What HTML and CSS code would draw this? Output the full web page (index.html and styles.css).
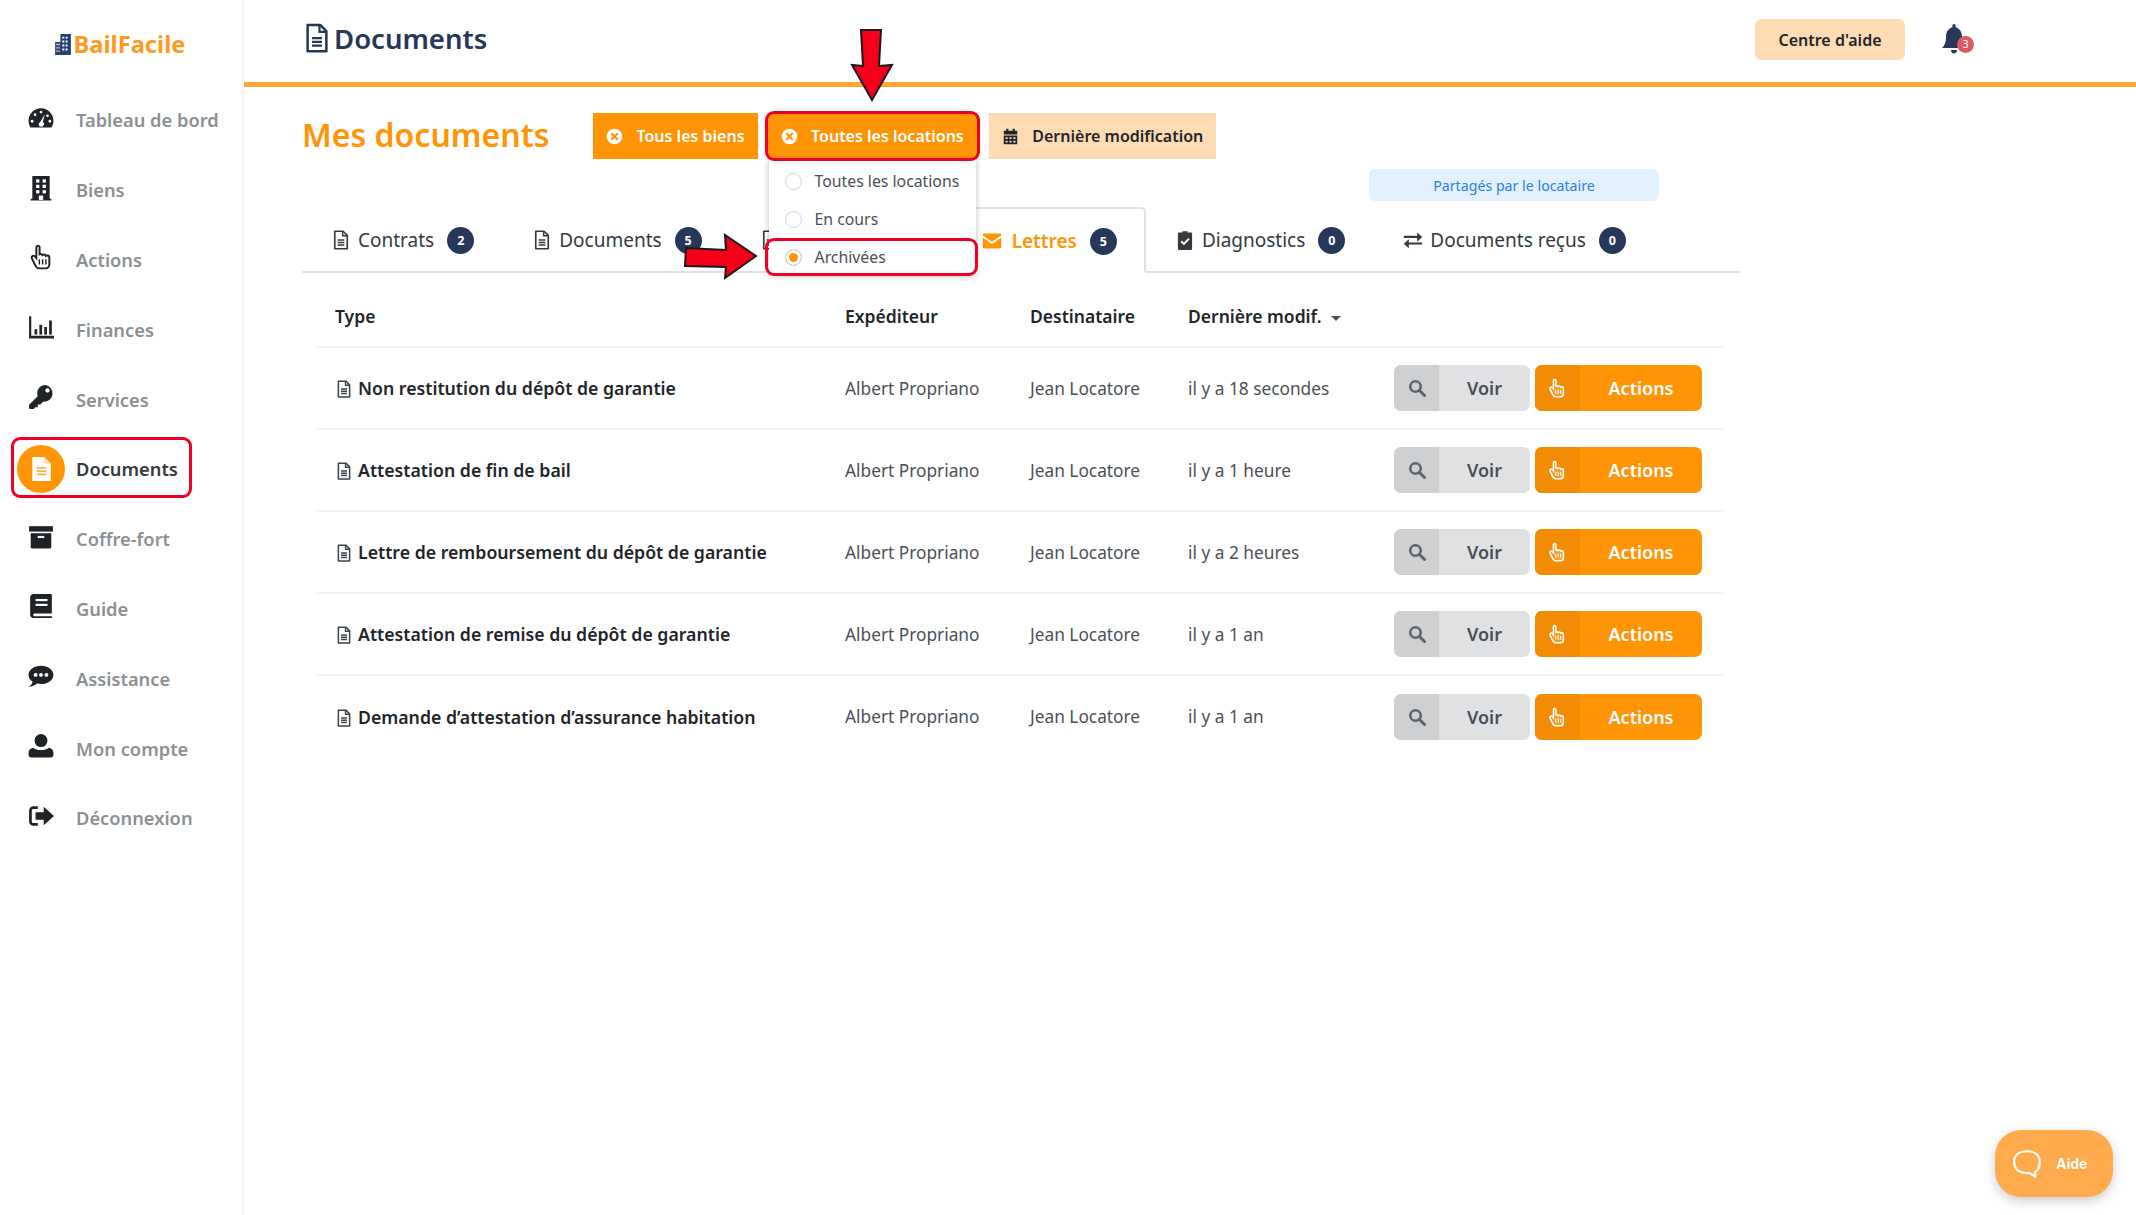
FILE: index.html
```html
<!DOCTYPE html>
<html lang="fr">
<head>
    <meta charset="UTF-8">
    <title>Mes documents</title>
    <link rel="stylesheet" href="styles.css">
</head>
<body>
<svg class="defs" width="0" height="0">
    <symbol id="i-gauge" viewBox="0 0 24 24"><path d="M12 3A11.5 11.5 0 0 0 .5 14.500c0 2.200.6 4 1.600 5.700.2.300.5.500.9.500h18c.4 0 .7-.2.900-.5 1-1.700 1.600-3.500 1.600-5.700A11.500 11.500 0 0 0 12 3z"/><g fill="#fff"><circle cx="3.800" cy="15" r="1.300"/><circle cx="6.500" cy="9" r="1.300"/><circle cx="12" cy="6.500" r="1.300"/><circle cx="20.200" cy="15" r="1.300"/><circle cx="18" cy="10" r="1.200"/><path d="M15.500 8.500l-1.800 7.100a2.300 2.300 0 1 1-2.500 3.900h-.6c-1-1-1-2.600.5-3.500z"/></g></symbol>
    <symbol id="i-building" viewBox="0 0 24 24"><path d="M4 1h16v21h1.500v1.500h-19V22H4z"/><g fill="#fff"><rect x="7.500" y="4" width="3" height="3"/><rect x="13.500" y="4" width="3" height="3"/><rect x="7.500" y="9" width="3" height="3"/><rect x="13.500" y="9" width="3" height="3"/><rect x="7.500" y="14" width="3" height="3"/><rect x="13.500" y="14" width="3" height="3"/><rect x="10" y="19" width="4" height="4"/></g></symbol>
    <symbol id="i-hand" viewBox="0 0 24 24"><path d="M9.500 1.500c-1 0-1.800.8-1.800 1.800V13l-1.500-1.600c-1.200-1.200-3.400 0-2.600 1.800l2.600 5.600c.8 1.700 2 3.700 4 3.700h6c2 0 3.500-1.500 3.500-3.500v-6.500c0-1.100-.8-1.900-1.800-1.900-.5 0-.9.200-1.300.5-.2-.9-1-1.400-1.800-1.400-.6 0-1.100.2-1.500.6-.3-.7-1-1-1.700-1-.3 0-.6 0-.9.200V3.300c0-1-.8-1.800-1.800-1.800z" fill="#fff" fill-opacity=".15" stroke="currentColor" stroke-width="1.800"/><path d="M10.500 14v5M13.500 14v5M16.500 14v5" stroke="currentColor" stroke-width="1.300" fill="none"/></symbol>
    <symbol id="i-chart" viewBox="0 0 24 24"><path d="M1 2h2v18h21v2.500H1z"/><rect x="6" y="14" width="2.500" height="5"/><rect x="10.500" y="10" width="2.500" height="9"/><rect x="15" y="12" width="2.500" height="7"/><rect x="19.500" y="6" width="2.500" height="13"/></symbol>
    <symbol id="i-key" viewBox="0 0 24 24"><path d="M16 1a7.500 7.500 0 0 0-7 10.200L1 19.200V22c0 .6.400 1 1 1h3.500l1-1.500H9v-2.500h2.500l2.400-2.700A7.500 7.500 0 1 0 16 1zm2 7a2 2 0 1 1 0-4 2 2 0 0 1 0 4z"/></symbol>
    <symbol id="i-archive" viewBox="0 0 24 24"><rect x="1" y="2" width="22" height="5"/><path d="M2.500 8.500h19v13c0 .6-.4 1-1 1h-17c-.6 0-1-.4-1-1z"/><rect x="9" y="11" width="6" height="2" fill="#fff"/></symbol>
    <symbol id="i-book" viewBox="0 0 24 24"><path d="M5 1h16c.6 0 1 .4 1 1v17H6c-1.500 0-1.500 2.500 0 2.500h16V23H5c-1.700 0-3-1.300-3-3V4c0-1.700 1.300-3 3-3z"/><rect x="7" y="5.500" width="11" height="2" fill="#fff"/><rect x="7" y="10" width="11" height="2" fill="#fff"/></symbol>
    <symbol id="i-comment" viewBox="0 0 24 24"><path d="M12 2.500C5.600 2.500.5 6.300.5 11c0 2.500 1.400 4.700 3.700 6.200C3.900 19 2.800 20.700.5 22c3 0 6-1.300 8-3 1.100.2 2.300.4 3.500.4 6.400 0 11.500-3.800 11.500-8.400S18.400 2.500 12 2.500z"/><g fill="#fff"><circle cx="7" cy="11" r="1.800"/><circle cx="12" cy="11" r="1.800"/><circle cx="17" cy="11" r="1.800"/></g></symbol>
    <symbol id="i-user" viewBox="0 0 24 24"><circle cx="12" cy="7" r="6"/><path d="M4.500 13.500C6.500 15 9 15.800 12 15.800s5.500-.8 7.500-2.300c2.500.5 4 2.300 4 5V20c0 1.500-1 2.500-2.500 2.500H3C1.500 22.500.5 21.500.5 20v-1.500c0-2.700 1.500-4.500 4-5z"/></symbol>
    <symbol id="i-signout" viewBox="0 0 24 24"><path d="M9 3H5C2.800 3 1 4.800 1 7v10c0 2.200 1.800 4 4 4h4v-2.500H5c-.8 0-1.500-.7-1.500-1.500V7c0-.8.700-1.500 1.500-1.500h4z"/><path d="M14.500 3.500L24 12l-9.500 8.500V15.500H7v-7h7.500z"/></symbol>
    <symbol id="i-file" viewBox="0 0 24 24"><path d="M4.500 1.500h10l5 5v16h-15z" fill="none" stroke="currentColor" stroke-width="2" stroke-linejoin="round"/><path d="M14 2v5h5M8 12h8M8 15h8M8 18h8" fill="none" stroke="currentColor" stroke-width="1.800"/></symbol>
    <symbol id="i-search" viewBox="0 0 24 24"><circle cx="10" cy="10" r="7" fill="none" stroke="currentColor" stroke-width="3.400"/><path d="M15 15l7 7" stroke="currentColor" stroke-width="4" stroke-linecap="round"/></symbol>
    <symbol id="i-calendar" viewBox="0 0 24 24"><path d="M6 1h3v3h6V1h3v3h3.500v5h-19V4H6z"/><path d="M2.500 10.500h19V23h-19zM5 13v2.500h3V13zm5.500 0v2.500h3V13zM16 13v2.500h3V13zM5 18v2.500h3V18zm5.500 0v2.500h3V18zM16 18v2.500h3V18z" fill-rule="evenodd"/></symbol>
    <symbol id="i-mail" viewBox="0 0 24 24"><path d="M1 4.500C1 3.700 1.700 3 2.500 3h19c.8 0 1.500.7 1.500 1.500v1L12 13 1 5.500z"/><path d="M1 8l11 7.500L23 8v11.500c0 .8-.7 1.500-1.500 1.500h-19C1.700 21 1 20.300 1 19.500z"/></symbol>
    <symbol id="i-check" viewBox="0 0 24 24"><path d="M9 3V1.500h6V3h4c.8 0 1.500.7 1.500 1.500v18c0 .8-.7 1.500-1.500 1.500H5c-.8 0-1.500-.7-1.500-1.500v-18C3.500 3.700 4.200 3 5 3z"/><path d="M7.500 13.500l3.200 3.300 6-6.300" fill="none" stroke="#fff" stroke-width="2.200"/></symbol>
    <symbol id="i-exchange" viewBox="0 0 24 24"><path d="M1 7h16V3l6 5.500-6 5.500V9.500H1zM23 15H7v-4L1 16.500 7 22v-4.500h16z"/></symbol>
    <symbol id="i-close" viewBox="0 0 24 24"><path d="M12 1a11 11 0 1 0 0 22 11 11 0 0 0 0-22zm5.600 14.400l-2.200 2.200L12 14.200l-3.400 3.400-2.200-2.200L9.800 12 6.400 8.600l2.200-2.200L12 9.800l3.400-3.400 2.200 2.200-3.400 3.400z"/></symbol>
</svg>

<div class="page">
    <aside class="sidebar">
        <a class="logo" href="#">
            <svg class="logo-icon" viewBox="0 0 24 32"><path fill="#27406f" d="M0 12h8V0h16v32H0z"/><path fill="#fff" d="M2 15h2v2H2zm3 0h2v2H5zM2 20h2v2H2zm3 0h2v2H5zM2 25h2v2H2zm3 0h2v2H5zM11 4h3v3h-3zm5 0h3v3h-3zm-5 6h3v3h-3zm5 0h3v3h-3zm-5 6h3v3h-3zm5 0h3v3h-3zm-5 6h3v3h-3zm5 0h3v3h-3z"/></svg>
            <span>BailFacile</span>
        </a>
        <nav class="menu">
            <a class="menu-item" href="#"><span class="menu-ico"><svg><use href="#i-gauge"/></svg></span>Tableau de bord</a>
            <a class="menu-item" href="#"><span class="menu-ico"><svg><use href="#i-building"/></svg></span>Biens</a>
            <a class="menu-item" href="#"><span class="menu-ico"><svg><use href="#i-hand"/></svg></span>Actions</a>
            <a class="menu-item" href="#"><span class="menu-ico"><svg><use href="#i-chart"/></svg></span>Finances</a>
            <a class="menu-item" href="#"><span class="menu-ico"><svg><use href="#i-key"/></svg></span>Services</a>
            <a class="menu-item active" href="#">
                <span class="menu-ico">
                    <svg viewBox="0 0 24 24"><path fill="#fff" d="M4 1h11l6 6v16H4z"/><path fill="#ffd9a3" d="M15 1v6h6z"/><path stroke="#ffb04d" stroke-width="1.600" d="M8 11h9M8 14h9M8 17h9"/></svg>
                </span>Documents
            </a>
            <a class="menu-item" href="#"><span class="menu-ico"><svg><use href="#i-archive"/></svg></span>Coffre-fort</a>
            <a class="menu-item" href="#"><span class="menu-ico"><svg><use href="#i-book"/></svg></span>Guide</a>
            <a class="menu-item" href="#"><span class="menu-ico"><svg><use href="#i-comment"/></svg></span>Assistance</a>
            <a class="menu-item" href="#"><span class="menu-ico"><svg><use href="#i-user"/></svg></span>Mon compte</a>
            <a class="menu-item" href="#"><span class="menu-ico"><svg><use href="#i-signout"/></svg></span>Déconnexion</a>
        </nav>
    </aside>

    <div class="main">
        <header class="topbar">
            <h1 class="page-title"><svg class="title-ico"><use href="#i-file"/></svg>Documents</h1>
            <div class="top-right">
                <a class="help-btn" href="#">Centre d'aide</a>
                <span class="bell">
                    <svg viewBox="0 0 24 32"><path d="M12 0c1 0 1.600.8 1.600 1.800v1.500C18 4.500 20 8.500 20 13c0 5 1 8 4 11H0c3-3 4-6 4-11 0-4.500 2-8.500 6.400-9.700V1.800C10.400.8 11 0 12 0zM9 26h6c0 2-1.300 3.500-3 3.500S9 28 9 26z"/></svg>
                    <span class="bell-count">3</span>
                </span>
            </div>
        </header>

        <section class="content">
            <div class="toolbar">
                <h2 class="section-title">Mes documents</h2>
                <button class="filter"><svg><use href="#i-close"/></svg>Tous les biens</button>
                <div class="filter-wrap">
                    <button class="filter"><svg><use href="#i-close"/></svg>Toutes les locations</button>
                    <ul class="dropdown">
                        <li><span class="radio"></span>Toutes les locations</li>
                        <li><span class="radio"></span>En cours</li>
                        <li class="checked"><span class="radio"></span>Archivées</li>
                    </ul>
                </div>
                <button class="filter light"><svg><use href="#i-calendar"/></svg>Dernière modification</button>
            </div>

            <div class="shared-row"><span class="shared">Partagés par le locataire</span></div>

            <ul class="tabs">
                <li class="tab"><svg><use href="#i-file"/></svg>Contrats<b class="count">2</b></li>
                <li class="tab"><svg><use href="#i-file"/></svg>Documents<b class="count">5</b></li>
                <li class="tab tab-hidden"><svg><use href="#i-file"/></svg></li>
                <li class="tab active"><svg><use href="#i-mail"/></svg>Lettres<b class="count">5</b></li>
                <li class="tab"><svg><use href="#i-check"/></svg>Diagnostics<b class="count">0</b></li>
                <li class="tab"><svg><use href="#i-exchange"/></svg>Documents reçus<b class="count">0</b></li>
            </ul>

            <table class="docs">
                <colgroup>
                    <col class="col-type"><col class="col-from"><col class="col-to"><col class="col-date"><col>
                </colgroup>
                <thead>
                    <tr><th>Type</th><th>Expéditeur</th><th>Destinataire</th><th>Dernière modif. <i class="caret"></i></th><th></th></tr>
                </thead>
                <tbody>
                    <tr>
                        <td class="doc-name"><svg><use href="#i-file"/></svg>Non restitution du dépôt de garantie</td>
                        <td>Albert Propriano</td><td>Jean Locatore</td><td>il y a 18 secondes</td>
                        <td><div class="btns"><a class="btn grey" href="#"><span class="btn-ico"><svg><use href="#i-search"/></svg></span><span class="btn-txt">Voir</span></a><a class="btn orange" href="#"><span class="btn-ico"><svg><use href="#i-hand"/></svg></span><span class="btn-txt">Actions</span></a></div></td>
                    </tr>
                    <tr>
                        <td class="doc-name"><svg><use href="#i-file"/></svg>Attestation de fin de bail</td>
                        <td>Albert Propriano</td><td>Jean Locatore</td><td>il y a 1 heure</td>
                        <td><div class="btns"><a class="btn grey" href="#"><span class="btn-ico"><svg><use href="#i-search"/></svg></span><span class="btn-txt">Voir</span></a><a class="btn orange" href="#"><span class="btn-ico"><svg><use href="#i-hand"/></svg></span><span class="btn-txt">Actions</span></a></div></td>
                    </tr>
                    <tr>
                        <td class="doc-name"><svg><use href="#i-file"/></svg>Lettre de remboursement du dépôt de garantie</td>
                        <td>Albert Propriano</td><td>Jean Locatore</td><td>il y a 2 heures</td>
                        <td><div class="btns"><a class="btn grey" href="#"><span class="btn-ico"><svg><use href="#i-search"/></svg></span><span class="btn-txt">Voir</span></a><a class="btn orange" href="#"><span class="btn-ico"><svg><use href="#i-hand"/></svg></span><span class="btn-txt">Actions</span></a></div></td>
                    </tr>
                    <tr>
                        <td class="doc-name"><svg><use href="#i-file"/></svg>Attestation de remise du dépôt de garantie</td>
                        <td>Albert Propriano</td><td>Jean Locatore</td><td>il y a 1 an</td>
                        <td><div class="btns"><a class="btn grey" href="#"><span class="btn-ico"><svg><use href="#i-search"/></svg></span><span class="btn-txt">Voir</span></a><a class="btn orange" href="#"><span class="btn-ico"><svg><use href="#i-hand"/></svg></span><span class="btn-txt">Actions</span></a></div></td>
                    </tr>
                    <tr>
                        <td class="doc-name"><svg><use href="#i-file"/></svg>Demande d’attestation d’assurance habitation</td>
                        <td>Albert Propriano</td><td>Jean Locatore</td><td>il y a 1 an</td>
                        <td><div class="btns"><a class="btn grey" href="#"><span class="btn-ico"><svg><use href="#i-search"/></svg></span><span class="btn-txt">Voir</span></a><a class="btn orange" href="#"><span class="btn-ico"><svg><use href="#i-hand"/></svg></span><span class="btn-txt">Actions</span></a></div></td>
                    </tr>
                </tbody>
            </table>
        </section>
    </div>
</div>

<a class="aide" href="#">
    <svg viewBox="0 0 30 30"><path d="M14 3c7 0 12 3.500 12 10 0 5-2 8.500-4.500 9.500L22 27l-5.500-3.500C8 24 2 21 2 13 2 6.500 7 3 14 3z" fill="none" stroke="#fff" stroke-width="2" stroke-linejoin="round"/></svg>
    Aide
</a>

<!-- annotations posees sur la capture -->
<div class="mark mark-menu"></div>
<div class="mark mark-filter"></div>
<div class="mark mark-option"></div>
<svg class="arrows" viewBox="0 0 2136 1215">
    <path d="M861 30h20l-2 36 13-1-20 35-20-35 11 1z"/>
    <path d="M686 248l40 2-1-15 31 21-31 22 1-11-41-1z"/>
</svg>
</body>
</html>
```

FILE: styles.css
```css
*{margin:0;padding:0;box-sizing:border-box;list-style:none;}

html,body{height:100%;}
body{font-family:"Noto Sans","Open Sans",sans-serif;color:#212529;background:#fff;overflow:hidden;}
a{text-decoration:none;color:inherit;}
button{font-family:inherit;border:0;}
svg{fill:currentColor;}
.defs{position:absolute;}

.page{display:flex;height:1215px;}

/* sidebar */
.sidebar{width:244px;flex:none;border-right:2px solid #f5f6f7;}
.logo{display:flex;align-items:center;justify-content:center;height:88px;gap:3px;padding-right:2px;font-size:23.700px;font-weight:700;color:#ff9a1f;}
.logo-icon{width:16px;height:21px;}
.menu{display:flex;flex-direction:column;margin-top:-3px;}
.menu-item{display:flex;align-items:center;height:69.8px;padding-left:17px;font-size:18.300px;font-weight:600;color:#8b9094;}
.menu-ico{width:48px;height:48px;margin-right:11px;display:flex;align-items:center;justify-content:center;color:#1f2327;flex:none;}
.menu-ico svg{width:26px;height:26px;margin-bottom:4px;}
.menu-item.active{color:#343a40;}
.menu-item.active .menu-ico{background:#ff9505;border-radius:50%;}
.menu-item.active .menu-ico svg{margin-bottom:0;}

/* header */
.main{flex:1;min-width:0;}
.topbar{height:87px;border-bottom:5px solid #ffa733;display:flex;align-items:center;justify-content:space-between;padding:0 170px 6px 58px;}
.page-title{display:flex;align-items:center;font-size:27.500px;font-weight:600;color:#26375a;}
.title-ico{width:30px;height:30px;margin-right:2px;}
.top-right{display:flex;align-items:center;gap:37px;margin-top:3px;}
.help-btn{display:flex;align-items:center;justify-content:center;width:150px;height:41px;border-radius:7px;background:#fddcb3;color:#212529;font-size:16px;font-weight:600;}
.bell{position:relative;display:block;width:24px;height:32px;color:#26375a;}
.bell svg{width:24px;height:32px;}
.bell-count{position:absolute;left:15px;top:12px;width:17px;height:17px;border-radius:50%;background:#dc5a66;color:#fff;font-size:10px;line-height:17px;text-align:center;}

/* content */
.content{padding:26px 0 0 58px;width:1497px;}
.toolbar{display:flex;align-items:center;height:46px;}
.section-title{font-size:32px;font-weight:600;color:#ff9505;width:291px;padding-bottom:3px;}
.filter{display:flex;align-items:center;height:46px;padding:0 13px;background:#ff9505;color:#fff;font-size:16px;font-weight:600;}
.filter svg{width:17px;height:17px;margin-right:13.500px;}
.toolbar > .filter{margin-right:10px;}
.filter.light{background:#fddcb3;color:#212529;margin-left:12px;}
.filter-wrap{position:relative;}
.dropdown{position:absolute;z-index:3;left:1px;top:46px;width:207px;height:116px;padding-top:3px;background:#fff;border-radius:0 0 4px 4px;box-shadow:0 1px 6px rgba(0,0,0,.25);}
.dropdown li{display:flex;align-items:center;height:38px;padding-left:16px;font-size:15.800px;color:#495057;}
.radio{width:17px;height:17px;border:1px solid #ced4da;border-radius:50%;margin-right:13px;background:#fff;}
.checked .radio{border:1px solid #ced4da;box-shadow:inset 0 0 0 3px #fff;background:#ff9505;}

.shared-row{display:flex;padding:10px 0 0 1067px;height:48px;}
.shared{display:flex;align-items:center;justify-content:center;width:290px;height:32px;border-radius:6px;background:#e3f0fd;color:#2d7fe0;font-size:14.200px;}

.tabs{display:flex;width:1438px;height:66px;border-bottom:2px solid #dee2e6;}
.tab{display:flex;align-items:center;padding:2px 29px 0;font-size:19px;color:#343a40;}
.tab svg{width:20px;height:20px;margin-right:7px;}
.tab-hidden{width:235px;}
.tab.active{color:#ff9505;font-weight:600;padding:2px 27px 0 14px;background:#fff;border:2px solid #dee2e6;border-bottom:2px solid #fff;border-radius:5px 5px 0 0;height:66px;}
.tab.active svg{margin-right:10px;}
.count{display:inline-block;width:27px;height:27px;margin-left:13px;border-radius:50%;background:#26375a;color:#fff;font-size:12.500px;line-height:27px;text-align:center;font-weight:700;}

/* table */
.docs{width:1407px;margin-left:15px;border-collapse:collapse;table-layout:fixed;font-size:17.300px;}
.col-type{width:512px;}
.col-from{width:185px;}
.col-to{width:158px;}
.col-date{width:206px;}
.docs th{height:74px;text-align:left;padding:12px 0 0 16px;font-weight:600;font-size:17.500px;color:#212529;border-bottom:2px solid #f1f2f3;}
.docs th:first-child{padding-left:18px;}
.docs td{height:82px;padding-left:16px;color:#4b5157;border-bottom:2px solid #f1f2f3;}
.docs tr:last-child td{border-bottom:0;}
.docs .doc-name{padding-left:18px;font-weight:600;font-size:17.700px;color:#212529;}
.doc-name svg{width:18px;height:18px;vertical-align:-3px;margin-right:5px;color:#3d4349;}
.caret{display:inline-block;margin-left:5px;vertical-align:2px;border:5px solid transparent;border-top-color:#555;border-bottom:0;}
.btns{display:flex;gap:5px;}
.btn{display:flex;height:46px;border-radius:7px;overflow:hidden;font-size:18px;font-weight:600;}
.btn-ico{width:45px;display:flex;align-items:center;justify-content:center;}
.btn-txt{flex:1;display:flex;align-items:center;justify-content:center;}
.btn.grey{width:136px;background:#e0e1e3;color:#495057;}
.grey .btn-ico{background:#cfd0d2;color:#5f6469;}
.grey .btn-ico svg{width:18px;height:18px;}
.btn.orange{width:167px;background:#ff9505;color:#fff;}
.orange .btn-ico{background:#f28c05;color:#fff;padding-right:2px;}
.orange .btn-ico svg{width:20px;height:20px;}

/* widget aide */
.aide{position:fixed;left:1995px;top:1130px;width:118px;height:67px;border-radius:26px;background:#ffaa4d;box-shadow:0 4px 12px rgba(0,0,0,.2);color:#fff;display:flex;align-items:center;padding-left:17px;gap:12px;font-family:Inter,sans-serif;font-size:14px;font-weight:700;}
.aide svg{width:32px;height:32px;}

/* annotations */
.mark{position:absolute;z-index:5;border:3px solid #f00024;border-radius:9px;}
.mark-menu{left:11px;top:437px;width:181px;height:61px;}
.mark-filter{left:765px;top:111px;width:215px;height:50px;}
.mark-option{left:765px;top:238px;width:213px;height:38px;}
.arrows{position:absolute;z-index:6;left:0;top:0;width:2136px;height:1215px;pointer-events:none;fill:#f40018;stroke:#1a1a1a;stroke-width:2;}
```
